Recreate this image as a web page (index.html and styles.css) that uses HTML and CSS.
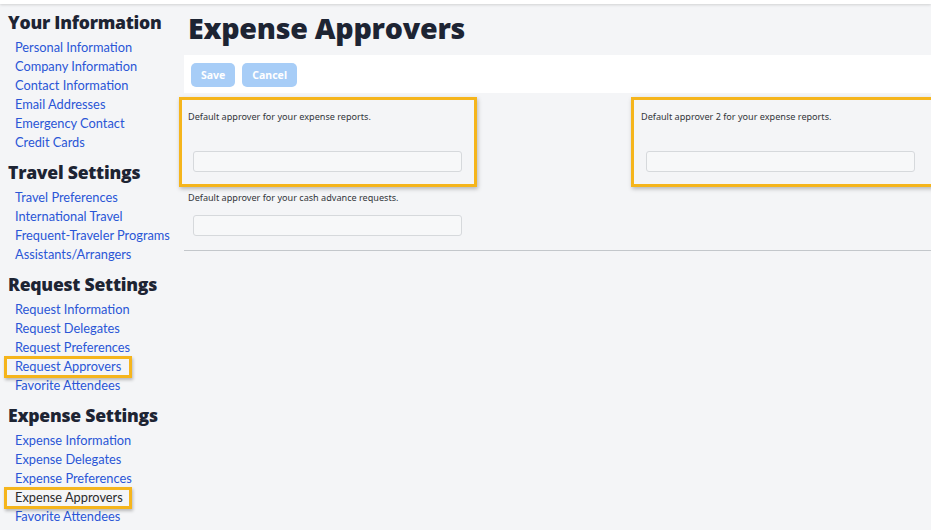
FILE: index.html
```html
<!DOCTYPE html>
<html lang="en">
<head>
    <meta charset="UTF-8">
    <meta name="viewport" content="width=device-width, initial-scale=1.0">
    <title>Expense Approvers</title>
    <link rel="stylesheet" href="styles.css">
</head>
<body>
    <div class="topbar"></div>
    <div class="page">
        <div class="sidebar">
            <h2>Your Information</h2>
            <ul>
                <li><a href="#">Personal Information</a></li>
                <li><a href="#">Company Information</a></li>
                <li><a href="#">Contact Information</a></li>
                <li><a href="#">Email Addresses</a></li>
                <li><a href="#">Emergency Contact</a></li>
                <li><a href="#">Credit Cards</a></li>
            </ul>
            <h2>Travel Settings</h2>
            <ul>
                <li><a href="#">Travel Preferences</a></li>
                <li><a href="#">International Travel</a></li>
                <li><a href="#">Frequent-Traveler Programs</a></li>
                <li><a href="#">Assistants/Arrangers</a></li>
            </ul>
            <h2>Request Settings</h2>
            <ul>
                <li><a href="#">Request Information</a></li>
                <li><a href="#">Request Delegates</a></li>
                <li><a href="#">Request Preferences</a></li>
                <li class="hl"><a href="#">Request Approvers</a></li>
                <li><a href="#">Favorite Attendees</a></li>
            </ul>
            <h2>Expense Settings</h2>
            <ul>
                <li><a href="#">Expense Information</a></li>
                <li><a href="#">Expense Delegates</a></li>
                <li><a href="#">Expense Preferences</a></li>
                <li class="hl"><span class="current">Expense Approvers</span></li>
                <li><a href="#">Favorite Attendees</a></li>
            </ul>
        </div>
        <div class="main">
            <h1>Expense Approvers</h1>
            <div class="toolbar">
                <button class="btn" disabled>Save</button>
                <button class="btn" disabled>Cancel</button>
            </div>
            <div class="fields">
                <div class="field hl">
                    <label>Default approver for your expense reports.</label>
                    <input type="text" class="box">
                </div>
                <div class="field hl right">
                    <label>Default approver 2 for your expense reports.</label>
                    <input type="text" class="box">
                </div>
                <div class="field small">
                    <label>Default approver for your cash advance requests.</label>
                    <input type="text" class="box">
                </div>
            </div>
            <div class="rule"></div>
        </div>
    </div>
</body>
</html>
```

FILE: styles.css
```css
body {
    margin: 0;
    background: #f4f5f7;
    font-family: "Noto Sans", "Open Sans", sans-serif;
    color: #1d2433;
    overflow: hidden;
}
.topbar {
    height: 4px;
    background: #fff;
    box-shadow: 0 1px 3px rgba(0, 0, 0, 0.15);
}
.page {
    display: flex;
}
.sidebar {
    width: 176px;
    flex: none;
    padding: 6px 0 0 8px;
}
.sidebar h2 {
    font-family: "Open Sans", sans-serif;
    font-weight: 800;
    font-size: 17.6px;
    letter-spacing: -0.25px;
    line-height: 24px;
    margin: 8px 0 4px;
}
.sidebar h2:first-child {
    margin-top: 0;
}
.sidebar ul {
    list-style: none;
    margin: 0;
    padding: 0 0 0 7px;
}
.sidebar li {
    font-family: Lato, sans-serif;
    font-size: 12.8px;
    line-height: 19px;
    white-space: nowrap;
}
.sidebar a {
    color: #2a56d6;
    text-decoration: none;
}
.current {
    color: #2b2b2b;
}
.hl {
    position: relative;
}
.sidebar .hl::after {
    content: "";
    position: absolute;
    left: -11px;
    top: -1px;
    width: 128px;
    height: 22px;
    box-sizing: border-box;
    border: 3px solid #f5b51c;
    box-shadow: 1px 2px 3px rgba(0, 0, 0, 0.25);
}
.main {
    flex: 1;
}
.main h1 {
    font-family: "Open Sans", sans-serif;
    font-weight: 800;
    font-size: 28.6px;
    letter-spacing: -0.25px;
    line-height: 44px;
    margin: 2px 0 5px 4px;
}
.toolbar {
    background: #fff;
    padding: 8px 7px 6px;
    display: flex;
    gap: 7px;
}
.btn {
    font-family: "Noto Sans", sans-serif;
    font-weight: 700;
    font-size: 10.5px;
    color: #fff;
    background: #a7cdf7;
    border: none;
    border-radius: 5px;
    height: 24px;
    padding: 0 10px;
}
.fields {
    display: grid;
    grid-template-columns: 453px 1fr;
    padding-top: 4px;
}
.field {
    padding: 14px 0 15px 4px;
}
.field label {
    display: block;
    font-size: 9.1px;
    line-height: 12px;
    color: #32363a;
}
.field .box {
    display: block;
    margin: 28px 0 0 5px;
}
.field.hl::after {
    content: "";
    position: absolute;
    left: -5px;
    top: 0;
    width: 298px;
    height: 90px;
    box-sizing: border-box;
    border: 3px solid #f5b51c;
    box-shadow: 1px 2px 4px rgba(0, 0, 0, 0.25);
}
.field.right::after {
    left: -6px;
    width: 310px;
}
.field.small {
    padding: 5px 0 0 4px;
}
.field.small .box {
    margin-top: 11px;
}
.box {
    width: 269px;
    height: 21px;
    box-sizing: border-box;
    background: #f7f8f9;
    border: 1px solid #d6d9dc;
    border-radius: 3px;
}
.rule {
    margin-top: 14px;
    border-top: 1px solid #c3c7cb;
}
```
